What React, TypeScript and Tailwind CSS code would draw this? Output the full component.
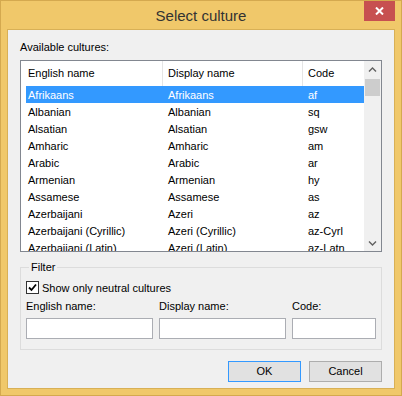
import React from 'react';

interface Culture {
  english: string;
  display: string;
  code: string;
}

const cultures: Culture[] = [
  { english: 'Afrikaans', display: 'Afrikaans', code: 'af' },
  { english: 'Albanian', display: 'Albanian', code: 'sq' },
  { english: 'Alsatian', display: 'Alsatian', code: 'gsw' },
  { english: 'Amharic', display: 'Amharic', code: 'am' },
  { english: 'Arabic', display: 'Arabic', code: 'ar' },
  { english: 'Armenian', display: 'Armenian', code: 'hy' },
  { english: 'Assamese', display: 'Assamese', code: 'as' },
  { english: 'Azerbaijani', display: 'Azeri', code: 'az' },
  { english: 'Azerbaijani (Cyrillic)', display: 'Azeri (Cyrillic)', code: 'az-Cyrl' },
  { english: 'Azerbaijani (Latin)', display: 'Azeri (Latin)', code: 'az-Latn' },
];

const Chevron: React.FC<{ down?: boolean }> = ({ down }) => (
  <svg width="9" height="6" viewBox="0 0 9 6">
    <path
      d={down ? 'M1 1.5 L4.5 5 L8 1.5' : 'M1 4.5 L4.5 1 L8 4.5'}
      fill="none"
      stroke="#606060"
      strokeWidth="1.4"
    />
  </svg>
);

const CultureList: React.FC = () => (
  <div className="mt-[6px] flex h-[192px] border border-[#828790] bg-white">
    <div className="flex flex-1 flex-col overflow-hidden">
      {/* column headers */}
      <div className="flex h-[25px] shrink-0 items-center">
        <div className="flex h-full w-[141px] items-center pl-[7px]">English name</div>
        <div className="flex h-full w-[140px] items-center border-l border-[#e5e5e5] pl-[5px]">Display name</div>
        <div className="flex h-full flex-1 items-center border-l border-[#e5e5e5] pl-[5px]">Code</div>
      </div>
      <div className="pl-[5px]">
        {cultures.map((c, i) => (
          <div
            key={c.code}
            className={
              i === 0
                ? 'flex h-[17px] items-center whitespace-nowrap bg-[#3399ff] pt-[1px] text-white'
                : 'flex h-[17px] items-center whitespace-nowrap pt-[1px]'
            }
          >
            <div className="w-[142px] shrink-0 pl-[2px]">{c.english}</div>
            <div className="w-[140px] shrink-0">{c.display}</div>
            <div className="flex-1">{c.code}</div>
          </div>
        ))}
      </div>
    </div>
    {/* vertical scrollbar */}
    <div className="flex w-[17px] shrink-0 flex-col bg-[#f0f0f0]">
      <div className="flex h-[17px] items-center justify-center">
        <Chevron />
      </div>
      <div className="mx-[1px] mt-[1px] h-[17px] bg-[#cdcdcd]" />
      <div className="flex-1" />
      <div className="flex h-[17px] items-center justify-center">
        <Chevron down />
      </div>
    </div>
  </div>
);

const FilterBox: React.FC = () => (
  <fieldset className="mt-[8px] border border-[#dcdcdc] px-[5px] pb-[10px]">
    <legend className="ml-[3px] px-[2px] leading-[14px]">Filter</legend>
    <div className="mt-[7px] flex h-[13px] items-center gap-[3px]">
      <span className="flex h-[13px] w-[13px] items-center justify-center border border-[#333333] bg-white">
        <svg width="9" height="9" viewBox="0 0 9 9">
          <path d="M1 4.5 L3.5 7 L8 1.5" fill="none" stroke="#000" strokeWidth="1.8" />
        </svg>
      </span>
      <span className="leading-[14px]">Show only neutral cultures</span>
    </div>
    <div className="mt-[5px] grid grid-cols-[127px_127px_84px] gap-x-[6px] leading-[14px]">
      <span>English name:</span>
      <span>Display name:</span>
      <span>Code:</span>
    </div>
    <div className="mt-[5px] grid grid-cols-[127px_127px_84px] gap-x-[6px]">
      <input className="h-[21px] border border-[#abadb3] bg-white outline-none" />
      <input className="h-[21px] border border-[#abadb3] bg-white outline-none" />
      <input className="h-[21px] border border-[#abadb3] bg-white outline-none" />
    </div>
  </fieldset>
);

const App: React.FC = () => {
  return (
    <div
      className="relative flex h-[396px] w-[402px] flex-col border border-[#d4a94f] bg-[#f0c86a] px-[6px] pb-[6px]"
      style={{ fontFamily: '"Liberation Sans", Arial, sans-serif' }}
    >
      <div className="h-[28px] pt-[2px] text-center text-[15px] leading-[26px] text-[#333333]">
        Select culture
      </div>
      <button className="absolute left-[363px] top-0 flex h-[20px] w-[31px] items-center justify-center bg-[#c75050]">
        <svg width="9" height="8" viewBox="0 0 9 8">
          <path d="M1 0.5 L8 7.5 M8 0.5 L1 7.5" stroke="#fff" strokeWidth="2" />
        </svg>
      </button>

      <div className="flex flex-1 flex-col border border-[#d8b056] bg-[#f0f0f0] px-[12px] text-[11px] text-black">
        <div className="pt-[10px] leading-[14px]">Available cultures:</div>
        <CultureList />
        <FilterBox />
        <div className="mt-[11px] flex justify-end gap-[8px]">
          <button className="h-[21px] w-[73px] border border-[#3399ff] bg-[#e1e1e1]">OK</button>
          <button className="h-[21px] w-[73px] border border-[#adadad] bg-[#e1e1e1]">Cancel</button>
        </div>
      </div>
    </div>
  );
};

export default App;
